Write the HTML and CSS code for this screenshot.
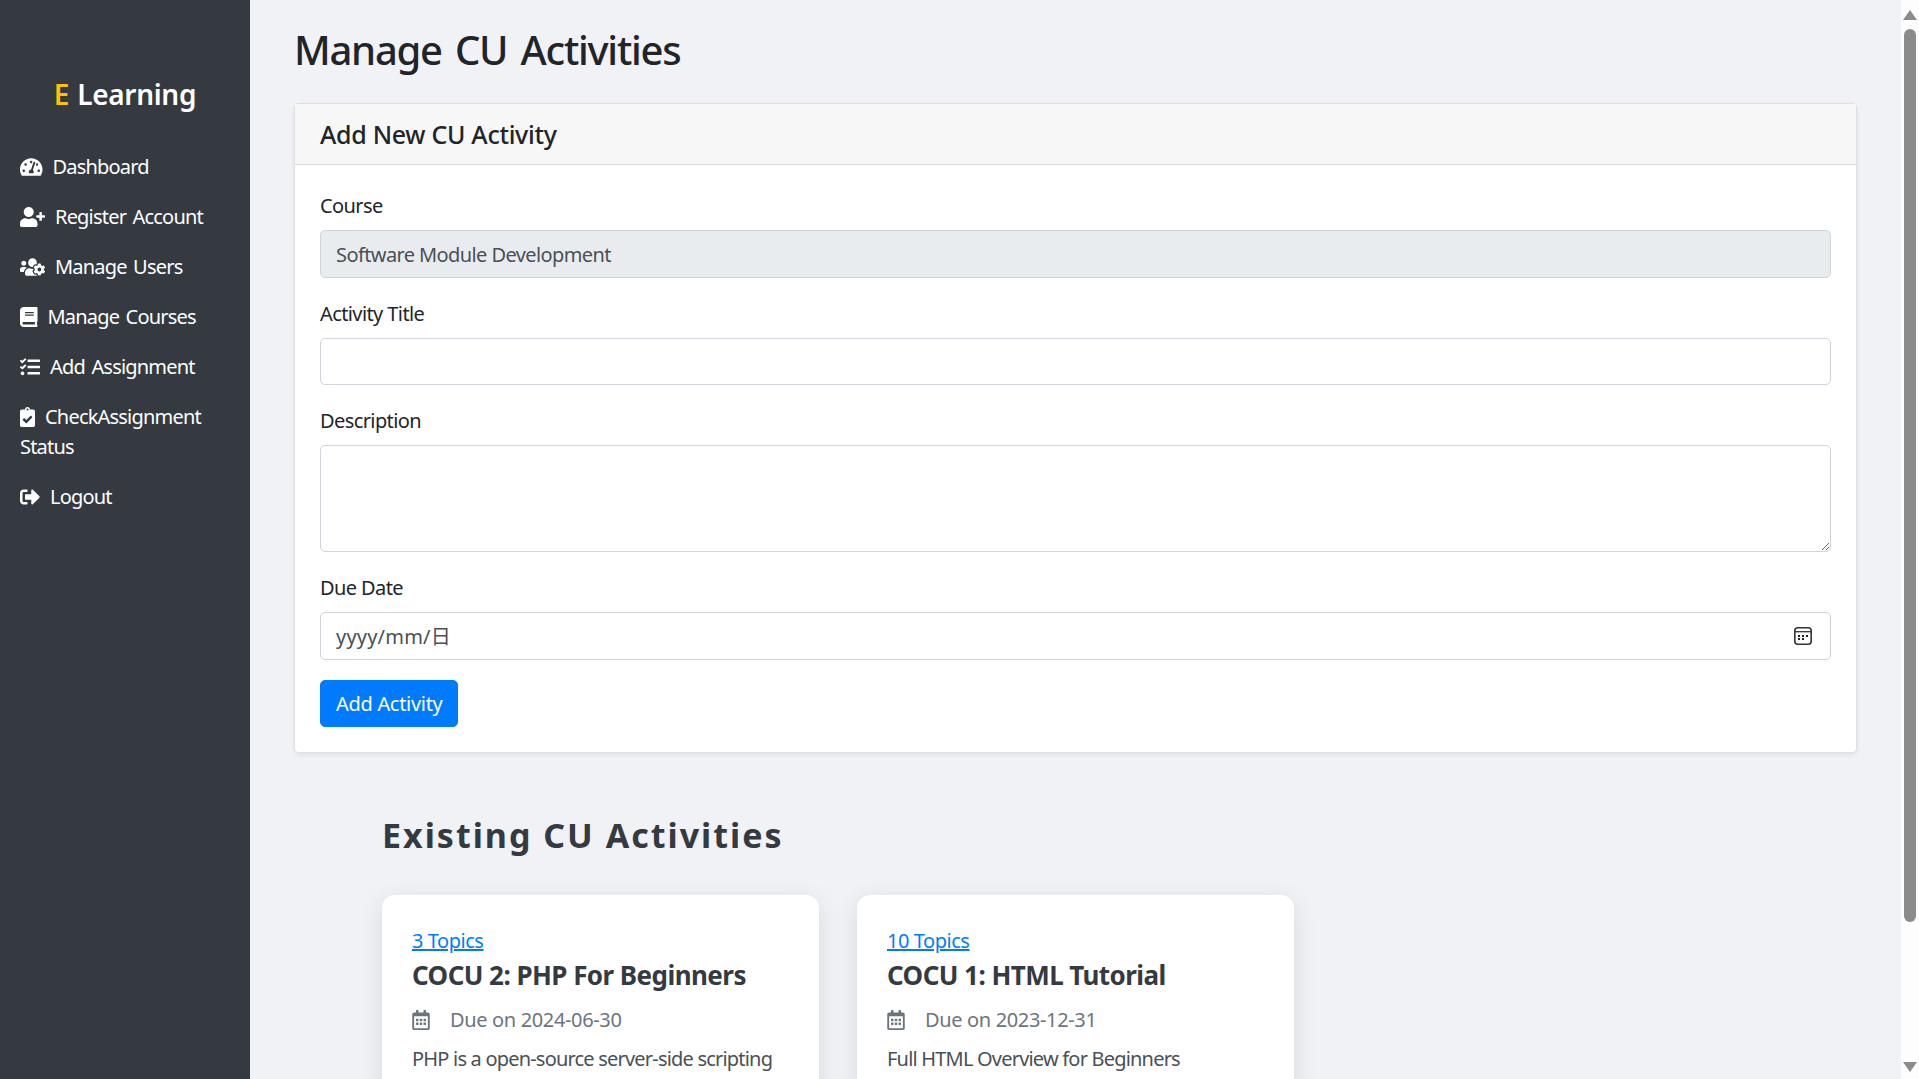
FILE: index.html
```html
<!DOCTYPE html>
<html lang="en">
<head>
    <meta charset="UTF-8">
    <meta name="viewport" content="width=device-width, initial-scale=1.0">
    <title>Manage CU Activities</title>
    <link rel="stylesheet" href="styles.css">
</head>
<body>
    <div class="app">
        <aside class="sidebar">
            <div class="logo"><span class="logo-e">E</span> Learning</div>
            <nav>
                <a class="nav-link" href="#"><svg class="nav-icon" viewBox="0 0 576 512"><path d="M288 32C128.94 32 0 160.94 0 320c0 52.8 14.25 102.26 39.06 144.8 5.61 9.62 16.3 15.2 27.44 15.2h443c11.14 0 21.83-5.58 27.44-15.2C561.75 422.26 576 372.8 576 320c0-159.06-128.94-288-288-288zm0 64c14.71 0 26.58 10.13 30.32 23.65-1.11 2.26-2.64 4.23-3.45 6.67l-9.22 27.67c-5.13 3.49-10.97 6.01-17.64 6.01-17.67 0-32-14.33-32-32S270.33 96 288 96zM96 384c-17.67 0-32-14.33-32-32s14.33-32 32-32 32 14.33 32 32-14.33 32-32 32zm48-160c-17.67 0-32-14.33-32-32s14.33-32 32-32 32 14.33 32 32-14.33 32-32 32zm246.77-72.41l-61.33 184C343.13 347.33 352 364.54 352 384c0 11.72-3.38 22.55-8.88 32H232.88c-5.5-9.45-8.88-20.28-8.88-32 0-33.94 26.5-61.43 59.9-63.59l61.34-184.01c4.17-12.56 17.73-19.45 30.36-15.17 12.57 4.19 19.35 17.79 15.17 30.36zm14.66 57.2l15.52-46.55c3.47-1.29 7.13-2.23 11.05-2.23 17.67 0 32 14.33 32 32s-14.33 32-32 32c-11.38-.01-20.89-6.28-26.57-15.22zM480 384c-17.67 0-32-14.33-32-32s14.33-32 32-32 32 14.33 32 32-14.33 32-32 32z"/></svg>Dashboard</a>
                <a class="nav-link" href="#"><svg class="nav-icon" viewBox="0 0 640 512"><path d="M624 208h-64v-64c0-8.8-7.2-16-16-16h-32c-8.8 0-16 7.2-16 16v64h-64c-8.8 0-16 7.2-16 16v32c0 8.8 7.2 16 16 16h64v64c0 8.8 7.2 16 16 16h32c8.8 0 16-7.2 16-16v-64h64c8.8 0 16-7.2 16-16v-32c0-8.8-7.2-16-16-16zm-400 48c70.7 0 128-57.3 128-128S294.7 0 224 0 96 57.3 96 128s57.3 128 128 128zm89.6 32h-16.7c-22.2 10.2-46.9 16-72.9 16s-50.6-5.8-72.9-16h-16.7C60.2 288 0 348.2 0 422.4V464c0 26.5 21.5 48 48 48h352c26.5 0 48-21.5 48-48v-41.6c0-74.2-60.2-134.4-134.4-134.4z"/></svg>Register Account</a>
                <a class="nav-link" href="#"><svg class="nav-icon" viewBox="0 0 640 512"><path d="M610.5 341.3c2.6-14.1 2.6-28.5 0-42.6l25.8-14.9c3-1.7 4.3-5.2 3.3-8.5-6.7-21.6-18.2-41.2-33.2-57.4-2.3-2.5-6-3.1-9-1.4l-25.8 14.9c-10.9-9.3-23.4-16.5-36.9-21.3v-29.8c0-3.4-2.4-6.4-5.7-7.1-22.3-5-45-4.8-66.2 0-3.3.7-5.7 3.7-5.7 7.1v29.8c-13.5 4.8-26 12-36.9 21.3l-25.8-14.9c-2.9-1.7-6.7-1.1-9 1.4-15 16.2-26.5 35.8-33.2 57.4-1 3.3.4 6.8 3.3 8.5l25.8 14.9c-2.6 14.1-2.6 28.5 0 42.6l-25.8 14.9c-3 1.7-4.3 5.2-3.3 8.5 6.7 21.6 18.2 41.1 33.2 57.4 2.3 2.5 6 3.1 9 1.4l25.8-14.9c10.9 9.3 23.4 16.5 36.9 21.3v29.8c0 3.4 2.4 6.4 5.7 7.1 22.3 5 45 4.8 66.2 0 3.3-.7 5.7-3.7 5.7-7.1v-29.8c13.5-4.8 26-12 36.9-21.3l25.8 14.9c2.9 1.7 6.7 1.1 9-1.4 15-16.2 26.5-35.8 33.2-57.4 1-3.3-.4-6.8-3.3-8.5l-25.8-14.9zM496 368.5c-26.8 0-48.5-21.8-48.5-48.5s21.8-48.5 48.5-48.5 48.5 21.8 48.5 48.5-21.7 48.5-48.5 48.5zM96 224c35.3 0 64-28.7 64-64s-28.7-64-64-64-64 28.7-64 64 28.7 64 64 64zm224 32c1.9 0 3.7-.5 5.6-.6 8.3-21.7 20.5-42.1 36.3-59.2 7.4-8 17.9-12.6 28.9-12.6 6.9 0 13.7 1.8 19.6 5.3l7.9 4.6c.8-.5 1.6-.9 2.4-1.4 7-14.6 11.2-30.8 11.2-48 0-61.9-50.1-112-112-112S208 82.1 208 144c0 61.9 50.1 112 112 112zm105.2 194.5c-2.3-1.2-4.6-2.6-6.8-3.9-8.2 4.8-15.3 9.8-27.5 9.8-10.9 0-21.4-4.6-28.9-12.6-18.3-19.8-32.3-43.9-40.2-69.6-10.7-34.5 24.9-49.7 25.8-50.3-.1-2.6-.1-5.2 0-7.8l-7.9-4.6c-3.8-2.2-7-5-9.8-8.1-3.3.2-6.5.6-9.8.6-24.6 0-47.6-6-68.5-16h-8.3C179.6 288 128 339.6 128 403.2V432c0 26.5 21.5 48 48 48h255.4c-3.7-6-6.2-12.8-6.2-20.3v-9.2zM173.1 274.6C161.5 263.1 145.6 256 128 256H64c-35.3 0-64 28.7-64 64v32c0 17.7 14.3 32 32 32h65.9c6.3-47.4 34.9-87.3 75.2-109.4z"/></svg>Manage Users</a>
                <a class="nav-link" href="#"><svg class="nav-icon" viewBox="0 0 448 512"><path d="M448 360V24c0-13.3-10.7-24-24-24H96C43 0 0 43 0 96v320c0 53 43 96 96 96h328c13.3 0 24-10.7 24-24v-16c0-7.5-3.5-14.3-8.9-18.7-4.2-15.4-4.2-59.3 0-74.7 5.4-4.3 8.9-11.1 8.9-18.6zM128 134c0-3.3 2.7-6 6-6h212c3.3 0 6 2.7 6 6v20c0 3.3-2.7 6-6 6H134c-3.3 0-6-2.7-6-6v-20zm0 64c0-3.3 2.7-6 6-6h212c3.3 0 6 2.7 6 6v20c0 3.3-2.7 6-6 6H134c-3.3 0-6-2.7-6-6v-20zm253.4 250H96c-17.7 0-32-14.3-32-32 0-17.6 14.4-32 32-32h285.4c-1.9 17.1-1.9 46.9 0 64z"/></svg>Manage Courses</a>
                <a class="nav-link" href="#"><svg class="nav-icon" viewBox="0 0 512 512"><path d="M139.61 35.5a12 12 0 0 0-17 0L58.93 98.81l-22.7-22.12a12 12 0 0 0-17 0L3.53 92.41a12 12 0 0 0 0 17l47.59 47.4a12.78 12.78 0 0 0 17.61 0l15.59-15.62L156.52 69a12.09 12.09 0 0 0 .09-17zm0 159.19a12 12 0 0 0-17 0l-63.68 63.72-22.7-22.1a12 12 0 0 0-17 0L3.53 252a12 12 0 0 0 0 17L51 316.5a12.77 12.77 0 0 0 17.6 0l15.7-15.69 72.2-72.22a12 12 0 0 0 .09-16.9zM64 368c-26.49 0-48.59 21.5-48.59 48S37.53 464 64 464a48 48 0 0 0 0-96zm432 16H208a16 16 0 0 0-16 16v32a16 16 0 0 0 16 16h288a16 16 0 0 0 16-16v-32a16 16 0 0 0-16-16zm0-320H208a16 16 0 0 0-16 16v32a16 16 0 0 0 16 16h288a16 16 0 0 0 16-16V80a16 16 0 0 0-16-16zm0 160H208a16 16 0 0 0-16 16v32a16 16 0 0 0 16 16h288a16 16 0 0 0 16-16v-32a16 16 0 0 0-16-16z"/></svg>Add Assignment</a>
                <a class="nav-link" href="#"><svg class="nav-icon" viewBox="0 0 384 512"><path d="M336 64h-80c0-35.3-28.7-64-64-64s-64 28.7-64 64H48C21.5 64 0 85.5 0 112v352c0 26.5 21.5 48 48 48h288c26.5 0 48-21.5 48-48V112c0-26.5-21.5-48-48-48zM192 40c13.3 0 24 10.7 24 24s-10.7 24-24 24-24-10.7-24-24 10.7-24 24-24zm121.2 231.8l-143 141.8c-4.7 4.7-12.3 4.6-17-.1l-82.6-83.3c-4.7-4.7-4.6-12.3.1-17L99.1 285c4.7-4.7 12.3-4.6 17 .1l46 46.4 106-105.2c4.7-4.7 12.3-4.6 17 .1l28.2 28.4c4.7 4.8 4.6 12.3-.1 17z"/></svg>CheckAssignment Status</a>
                <a class="nav-link" href="#"><svg class="nav-icon" viewBox="0 0 512 512"><path d="M497 273L329 441c-15 15-41 4.5-41-17v-96H152c-13.3 0-24-10.7-24-24v-96c0-13.3 10.7-24 24-24h136V88c0-21.4 25.9-32 41-17l168 168c9.3 9.4 9.3 24.6 0 34zM192 436v-40c0-6.6-5.4-12-12-12H96c-17.7 0-32-14.3-32-32V160c0-17.7 14.3-32 32-32h84c6.6 0 12-5.4 12-12V76c0-6.6-5.4-12-12-12H96c-53 0-96 43-96 96v192c0 53 43 96 96 96h84c6.6 0 12-5.4 12-12z"/></svg>Logout</a>
            </nav>
        </aside>

        <main class="content">
            <h1>Manage CU Activities</h1>

            <section class="form-card">
                <div class="form-card-header">Add New CU Activity</div>
                <form class="form-card-body">
                    <div class="form-group">
                        <label for="course">Course</label>
                        <input class="form-control" type="text" id="course" value="Software Module Development" disabled>
                    </div>
                    <div class="form-group">
                        <label for="title">Activity Title</label>
                        <input class="form-control" type="text" id="title">
                    </div>
                    <div class="form-group">
                        <label for="description">Description</label>
                        <textarea class="form-control description" id="description"></textarea>
                    </div>
                    <div class="form-group">
                        <label>Due Date</label>
                        <div class="form-control date-field">
                            <span class="date-mask">yyyy/mm/日</span>
                            <svg class="date-icon" viewBox="0 0 18 18"><rect x="0.8" y="0.8" width="16.4" height="16.4" rx="3" fill="none" stroke="#333" stroke-width="1.6"/><path d="M1 4.7h16" stroke="#333" stroke-width="1.3"/><path d="M4 8h2v2H4zM8 8h2v2H8zM12 8h2v2h-2zM4 11h2v2H4zM8 11h2v2H8z" fill="#222"/></svg>
                        </div>
                    </div>
                    <button type="button" class="btn-add">Add Activity</button>
                </form>
            </section>

            <section class="existing">
                <h2>Existing CU Activities</h2>
                <div class="activity-list">
                    <article class="activity-card">
                        <a class="topics" href="#">3 Topics</a>
                        <h3>COCU 2: PHP For Beginners</h3>
                        <div class="due"><svg class="due-icon" viewBox="0 0 448 512"><use href="#calendar"/></svg>Due on 2024-06-30</div>
                        <p>PHP is a open-source server-side scripting</p>
                    </article>
                    <article class="activity-card">
                        <a class="topics" href="#">10 Topics</a>
                        <h3>COCU 1: HTML Tutorial</h3>
                        <div class="due"><svg class="due-icon" viewBox="0 0 448 512"><use href="#calendar"/></svg>Due on 2023-12-31</div>
                        <p>Full HTML Overview for Beginners</p>
                    </article>
                </div>
            </section>
        </main>

        <div class="scrollbar">
            <span class="arrow-up"></span>
            <span class="thumb"></span>
            <span class="arrow-down"></span>
        </div>
    </div>

    <svg class="defs" width="0" height="0"><defs><path id="calendar" d="M148 288h-40c-6.6 0-12-5.4-12-12v-40c0-6.6 5.4-12 12-12h40c6.6 0 12 5.4 12 12v40c0 6.6-5.4 12-12 12zm108-12v-40c0-6.6-5.4-12-12-12h-40c-6.6 0-12 5.4-12 12v40c0 6.6 5.4 12 12 12h40c6.6 0 12-5.4 12-12zm96 0v-40c0-6.6-5.4-12-12-12h-40c-6.6 0-12 5.4-12 12v40c0 6.6 5.4 12 12 12h40c6.6 0 12-5.4 12-12zm-96 96v-40c0-6.6-5.4-12-12-12h-40c-6.6 0-12 5.4-12 12v40c0 6.6 5.4 12 12 12h40c6.6 0 12-5.4 12-12zm-96 0v-40c0-6.6-5.4-12-12-12h-40c-6.6 0-12 5.4-12 12v40c0 6.6 5.4 12 12 12h40c6.6 0 12-5.4 12-12zm192 0v-40c0-6.6-5.4-12-12-12h-40c-6.6 0-12 5.4-12 12v40c0 6.6 5.4 12 12 12h40c6.6 0 12-5.4 12-12zm96-260v352c0 26.5-21.5 48-48 48H48c-26.5 0-48-21.5-48-48V112c0-26.5 21.5-48 48-48h48V12c0-6.6 5.4-12 12-12h40c6.6 0 12 5.4 12 12v52h128V12c0-6.6 5.4-12 12-12h40c6.6 0 12 5.4 12 12v52h48c26.5 0 48 21.5 48 48zm-48 346V160H48v298c0 3.3 2.7 6 6 6h340c3.3 0 6-2.7 6-6z"/></defs></svg>
</body>
</html>
```

FILE: styles.css
```css
* {
    box-sizing: border-box;
}
html, body {
    height: 100%;
    margin: 0;
    overflow: hidden;
}
body {
    font-family: 'Noto Sans', 'Noto Sans CJK SC', sans-serif;
    font-size: 20px;
    line-height: 30px;
    letter-spacing: -0.6px;
    color: #212529;
    background-color: #f0f2f6;
}
.app {
    display: flex;
    height: 100vh;
}
.defs {
    position: absolute;
}

/* sidebar */
.sidebar {
    flex: 0 0 250px;
    background-color: #343a40;
    color: #fff;
    padding: 70px 20px 0;
}
.logo {
    text-align: center;
    font-size: 28px;
    line-height: 48px;
    font-weight: 600;
    letter-spacing: -0.3px;
    word-spacing: 1px;
    margin-bottom: 24px;
}
.logo-e {
    color: #ffc107;
}
.nav-link {
    display: block;
    color: #fff;
    text-decoration: none;
    padding: 10px 0;
    letter-spacing: -0.8px;
    word-spacing: 2px;
}
.nav-icon {
    height: 20px;
    fill: #fff;
    margin-right: 10px;
    vertical-align: -3px;
}

/* main column */
.content {
    flex: 1;
    min-width: 0;
    padding: 0 44px;
    overflow: hidden;
}
h1 {
    font-size: 40px;
    line-height: 48px;
    font-weight: 500;
    letter-spacing: -1.25px;
    word-spacing: 4px;
    margin: 26px 0 29px;
}
.form-card {
    background: #fff;
    border: 1px solid rgba(0,0,0,0.125);
    border-radius: 5px;
    box-shadow: 0 2px 5px rgba(0,0,0,0.075);
}
.form-card-header {
    background: #f7f7f7;
    border-bottom: 1px solid rgba(0,0,0,0.125);
    padding: 15px 25px;
    height: 61px;
    font-size: 25px;
    font-weight: 500;
    letter-spacing: -0.3px;
}
.form-card-body {
    padding: 25px;
}
.form-group {
    margin-bottom: 20px;
}
label {
    display: block;
    padding-top: 1px;
    margin-bottom: 9px;
}
.form-control {
    display: block;
    width: 100%;
    height: 47.5px;
    padding: 8px 15px 6px;
    font: inherit;
    letter-spacing: inherit;
    color: #495057;
    background: #fff;
    border: 1px solid #ced4da;
    border-radius: 5px;
}
.form-control:disabled {
    background: #e9ecef;
    opacity: 1;
}
.description {
    height: 107px;
}
.date-field {
    display: flex;
    align-items: center;
    justify-content: space-between;
}
.date-mask {
    letter-spacing: 0.2px;
}
.date-icon {
    width: 18px;
    height: 18px;
    margin-right: 3px;
    margin-top: -2px;
}
.btn-add {
    display: block;
    height: 47.5px;
    padding: 2px 15px 0;
    font: inherit;
    letter-spacing: -0.3px;
    color: #fff;
    background-color: #007bff;
    border: 1px solid #007bff;
    border-radius: 5px;
}

/* existing activities */
.existing {
    padding: 58px 0 0 88px;
}
h2 {
    font-size: 34px;
    line-height: 48px;
    font-weight: 700;
    letter-spacing: 2px;
    color: #343a40;
    margin: 0 0 36px;
}
.activity-list {
    display: flex;
    gap: 38px;
}
.activity-card {
    flex: 0 0 437px;
    background: #fff;
    border-radius: 13px;
    padding: 31px 30px 30px;
    box-shadow: 0 5px 25px rgba(0,0,0,0.1);
}
.topics {
    display: block;
    color: #007bff;
    letter-spacing: -0.45px;
}
h3 {
    font-size: 26px;
    line-height: 36px;
    font-weight: 700;
    letter-spacing: -0.55px;
    color: #343a40;
    margin: 1px 0 12px;
}
.due {
    color: #6c757d;
    letter-spacing: -0.35px;
}
.due-icon {
    height: 20px;
    width: 18px;
    fill: #6c757d;
    margin-right: 20px;
    vertical-align: -3px;
}
.activity-card p {
    margin: 9px 0 0;
    color: #495057;
    letter-spacing: -0.8px;
}

/* scrollbar drawn by hand, the page itself does not scroll */
.scrollbar {
    flex: 0 0 18px;
    background: #fdfdfd;
    display: flex;
    flex-direction: column;
    align-items: center;
    padding: 10px 0 7px;
}
.arrow-up {
    border: 7px solid transparent;
    border-top: 0;
    border-bottom: 10px solid #8b8b8b;
}
.arrow-down {
    border: 7px solid transparent;
    border-bottom: 0;
    border-top: 10px solid #8b8b8b;
}
.thumb {
    width: 12px;
    height: 893px;
    margin: 9px 0 auto;
    background: #8b8b8b;
    border-radius: 6px;
}
```
